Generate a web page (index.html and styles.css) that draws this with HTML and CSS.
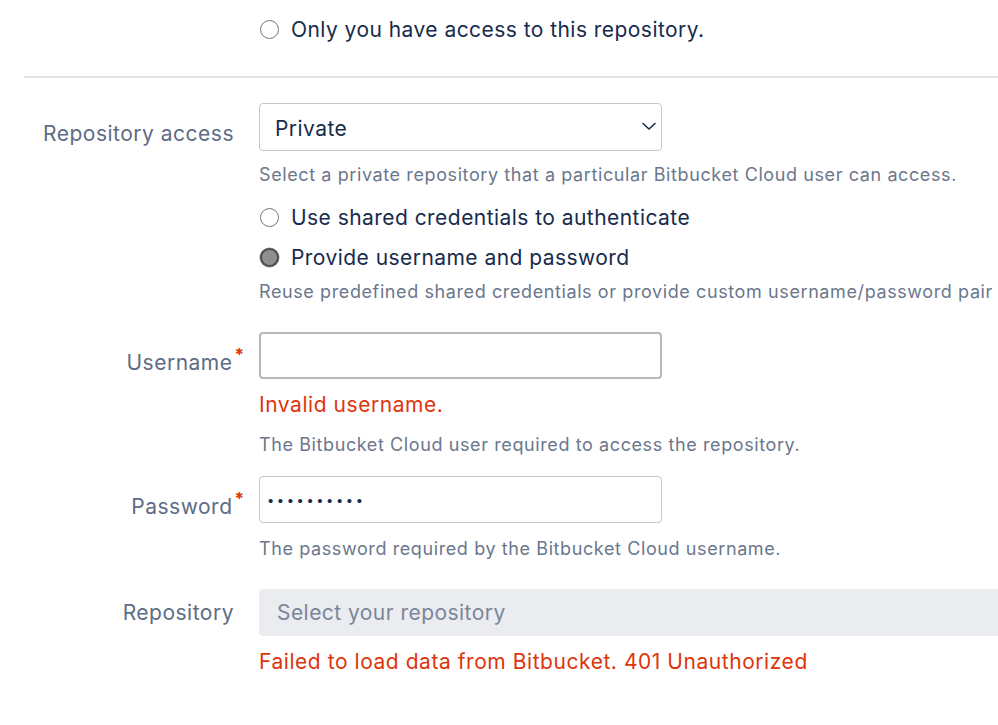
FILE: index.html
```html
<!DOCTYPE html>
<html>
<head>
<meta charset="utf-8">
<link rel="stylesheet" href="styles.css">
</head>
<body>
<div class="page">
  <div class="row top-row">
    <div class="label"></div>
    <div class="field">
      <label class="radio-line"><span class="radio"></span><span>Only you have access to this repository.</span></label>
    </div>
  </div>
  <div class="divider"></div>

  <div class="row row-access">
    <div class="label">Repository access</div>
    <div class="field">
      <div class="select">
        <span class="select-value">Private</span>
        <svg class="chevron" width="16" height="10" viewBox="0 0 16 10"><polyline points="2,2.5 8,8 14,2.5" fill="none" stroke="#172B4D" stroke-width="1.6" stroke-linecap="round" stroke-linejoin="round"/></svg>
      </div>
      <div class="help help-first">Select a private repository that a particular Bitbucket Cloud user can access.</div>
      <label class="radio-line radio-a"><span class="radio"></span><span>Use shared credentials to authenticate</span></label>
      <label class="radio-line"><span class="radio checked"></span><span>Provide username and password</span></label>
      <div class="help help-tight">Reuse predefined shared credentials or provide custom username/password pair</div>
    </div>
  </div>

  <div class="row row-user">
    <div class="label">Username<sup class="req">*</sup></div>
    <div class="field">
      <div class="input input-error"></div>
      <div class="error err-user">Invalid username.</div>
      <div class="help help-user">The Bitbucket Cloud user required to access the repository.</div>
    </div>
  </div>

  <div class="row row-pass">
    <div class="label">Password<sup class="req">*</sup></div>
    <div class="field">
      <div class="input"><span class="dots">••••••••••</span></div>
      <div class="help help-pass">The password required by the Bitbucket Cloud username.</div>
    </div>
  </div>

  <div class="row row-repo">
    <div class="label label-repo">Repository</div>
    <div class="field">
      <div class="repo-box">Select your repository</div>
      <div class="error err-repo">Failed to load data from Bitbucket. 401 Unauthorized</div>
    </div>
  </div>
</div>
</body>
</html>
```

FILE: styles.css
```css
html, body {
  margin: 0;
  padding: 0;
  background: #ffffff;
}
body {
  font-family: Inter, "Liberation Sans", Arial, sans-serif;
  color: #172B4D;
  overflow: hidden;
}
.page {
  padding-left: 24px;
  width: 974px;
}
.row {
  display: grid;
  grid-template-columns: 210px 1fr;
  column-gap: 25px;
}
.label {
  font-size: 21px;
  letter-spacing: 0.5px;
  line-height: 26px;
  color: #5E6C84;
  text-align: right;
  padding-top: 18px;
  white-space: nowrap;
}
.label-repo {
  padding-top: 11px;
}
.req {
  color: #DE350B;
  font-size: 17px;
  font-weight: 700;
  line-height: 0;
  position: relative;
  top: -1px;
  margin-left: 2px;
  margin-right: -10px;
  letter-spacing: 0;
}
.field {
  min-width: 0;
}
.top-row {
  padding-top: 9px;
}
.top-row .label {
  padding-top: 0;
}
.radio-line {
  display: flex;
  align-items: center;
  gap: 12px;
  height: 40px;
  font-size: 21px;
  letter-spacing: 0.45px;
  color: #172B4D;
  white-space: nowrap;
}
.radio {
  width: 17px;
  height: 17px;
  border: 1.5px solid #767676;
  border-radius: 50%;
  background: #fff;
  flex: none;
  margin-left: 1px;
}
.radio.checked {
  background: #8f8f8f;
  border: 2.5px solid #4f4f4f;
  width: 15px;
  height: 15px;
  box-shadow: 0 0 0 0.5px #9a9a9a;
}
.divider {
  height: 2px;
  background: #e3e4e9;
  margin-top: 27px;
  margin-bottom: 25px;
  margin-right: -30px;
}
.select {
  height: 46px;
  border: 1px solid #c1c7d0;
  border-radius: 4px;
  display: flex;
  align-items: center;
  justify-content: space-between;
  padding: 0 4px 0 15px;
  box-sizing: content-box;
  width: 382px;
  font-size: 21px;
  letter-spacing: 0.45px;
  color: #172B4D;
}
.select-value {
  padding-top: 3px;
}
.chevron {
  display: block;
  margin-top: -2px;
}
.help {
  font-size: 18px;
  letter-spacing: 0.6px;
  line-height: 24px;
  color: #6B778C;
  white-space: nowrap;
}
.help-first {
  margin-top: 12px;
}
.radio-a {
  margin-top: 10px;
}
.help-tight {
  margin-top: 3px;
}
.row-user {
  margin-top: 28px;
}
.input {
  border: 1px solid #c1c7d0;
  border-radius: 4px;
  display: flex;
  align-items: center;
  padding-left: 8px;
  box-sizing: border-box;
  width: 403px;
  height: 47px;
}
.input-error {
  border: 2px solid #b6b8bc;
}
.dots {
  font-family: "Liberation Sans", Arial, sans-serif;
  font-size: 15px;
  letter-spacing: 4.6px;
  color: #172B4D;
  margin-top: 1px;
}
.error {
  font-size: 21px;
  letter-spacing: 0.55px;
  line-height: 26px;
  color: #DE350B;
  white-space: nowrap;
}
.err-user {
  margin-top: 13px;
}
.help-user {
  margin-top: 15px;
}
.row-pass {
  margin-top: 19px;
}
.help-pass {
  margin-top: 14px;
}
.row-repo {
  margin-top: 28px;
}
.repo-box {
  height: 47px;
  background: #ebecf0;
  border-radius: 4px 0 0 4px;
  margin-right: -40px;
  display: flex;
  align-items: center;
  padding-left: 18px;
  font-size: 21px;
  letter-spacing: 0.45px;
  color: #7A869A;
}
.err-repo {
  margin-top: 13px;
}
```
